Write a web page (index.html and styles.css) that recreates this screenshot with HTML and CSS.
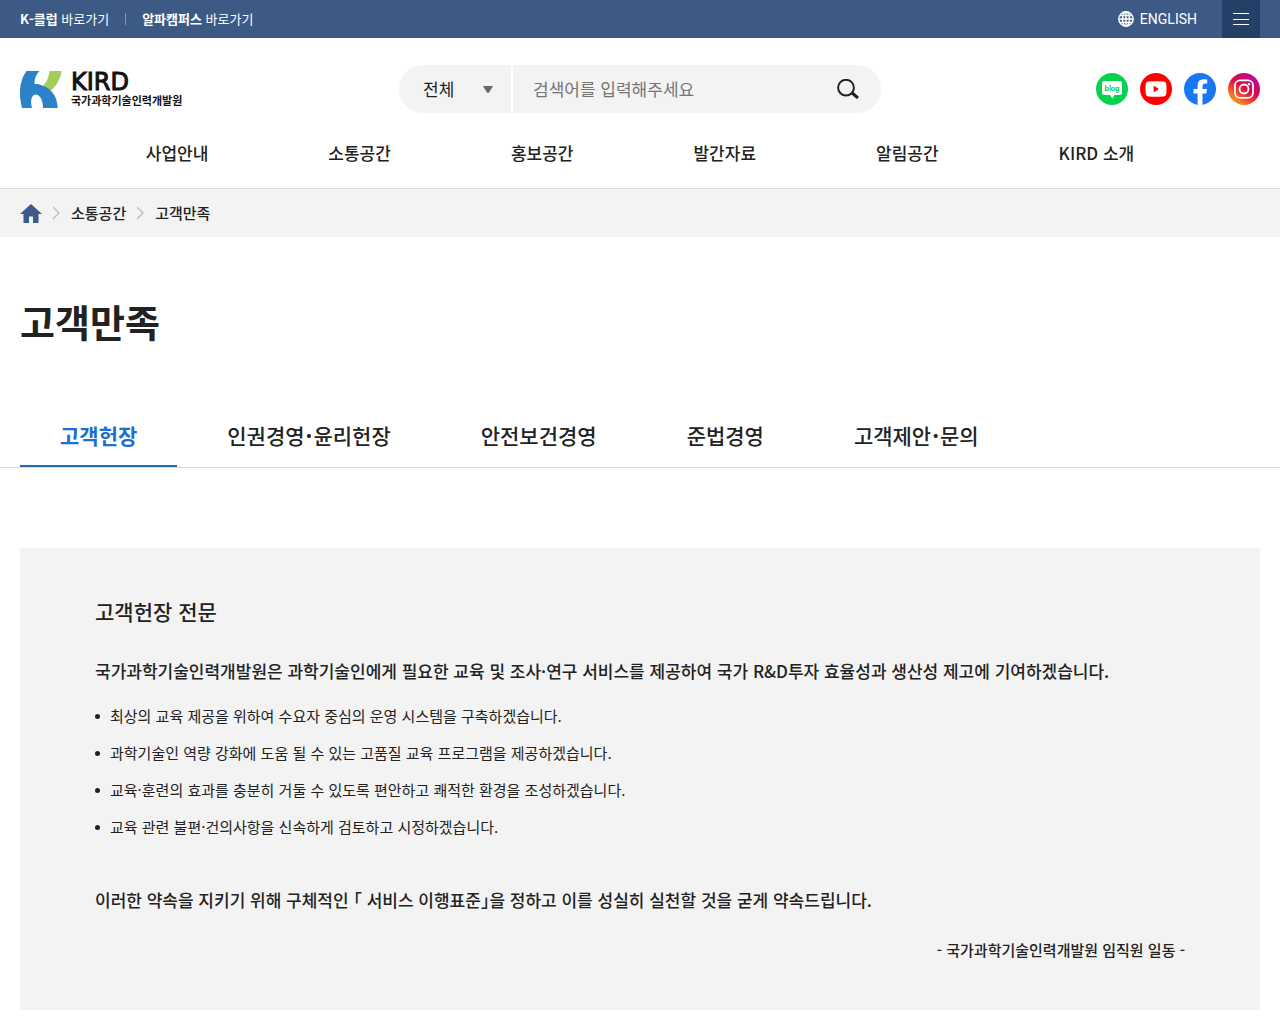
FILE: index.html
```html
<!DOCTYPE html>
<html lang="ko">
<head>
<meta charset="utf-8">
<meta name="viewport" content="width=device-width, initial-scale=1">
<title>고객만족 | KIRD 국가과학기술인력개발원</title>
<link rel="stylesheet" href="styles.css">
</head>
<body>
<div class="topbar">
  <ul class="shortcuts">
    <li><a href="#"><strong>K-클럽</strong> 바로가기</a></li>
    <li><a href="#"><strong>알파캠퍼스</strong> 바로가기</a></li>
  </ul>
  <div class="topbar-tools">
    <a class="language" href="#">
      <svg width="16" height="16" viewBox="0 0 16 16" fill="none" stroke="currentColor" stroke-width="1.4" aria-hidden="true"><circle cx="8" cy="8" r="7.2"/><ellipse cx="8" cy="8" rx="3.5" ry="7.2"/><path d="M8 1v14M1 8h14M2 4.5h12M2 11.5h12"/></svg>
      ENGLISH
    </a>
    <button class="menu-button" type="button" aria-label="전체메뉴">
      <svg width="16" height="14" viewBox="0 0 16 14" stroke="currentColor" aria-hidden="true"><path d="M0 1.5h16M0 7.5h16M0 12.5h16"/></svg>
    </button>
  </div>
</div>

<header class="header">
  <div class="header-main">
    <a class="logo" href="#">
      <svg width="42" height="37" viewBox="0 0 42 37" aria-hidden="true">
        <path fill="#a5cd5b" d="M29.500 0H41.500C40.500 8.500 36 16.500 28.500 21C27 18.500 25 17 22.500 15.500C26.500 12 28.500 6.500 29.500 0Z"/>
        <path fill="#2c82c9" d="M6.500 0H19.500C16.500 3 14.300 7.500 14.300 12.700C26 13.500 37.500 21 37.700 37H23C23 30 20.500 24 16 23.500C11.500 23.500 10 30 12 37H2C-1.500 24 -1 10 6.500 0Z"/>
      </svg>
      <span class="logo-text"><span class="logo-name">KIRD</span><span class="logo-org">국가과학기술인력개발원</span></span>
    </a>
    <form class="search" role="search">
      <div class="search-scope">
        <select aria-label="검색 범위"><option>전체</option></select>
        <svg class="caret" width="10" height="7" viewBox="0 0 10 7" fill="#666" aria-hidden="true"><path d="M0 0h10L6 6.500Q5 7.400 4 6.500Z"/></svg>
      </div>
      <div class="search-field">
        <input type="text" placeholder="검색어를 입력해주세요" aria-label="검색어">
        <button type="button" aria-label="검색">
          <svg width="22" height="20" viewBox="0 0 22 20" fill="none" stroke="#222" aria-hidden="true"><circle cx="9" cy="8.700" r="7.900" stroke-width="2"/><path d="M14.500 13.500L21 19" stroke-width="3"/></svg>
        </button>
      </div>
    </form>
    <div class="social">
      <a href="#" aria-label="블로그"><svg width="32" height="32" viewBox="0 0 32 32"><circle cx="16" cy="16" r="16" fill="#03d34f"/><path fill="#fff" d="M8.500 8h15q2.500 0 2.500 2.500v9q0 2.500-2.500 2.500h-5l-2.200 3.800L14.100 22H8.500Q6 22 6 19.500v-9Q6 8 8.500 8Z"/><text class="blog-text" x="16" y="18" text-anchor="middle">blog</text></svg></a>
      <a href="#" aria-label="유튜브"><svg width="32" height="32" viewBox="0 0 32 32"><circle cx="16" cy="16" r="16" fill="#f00"/><path fill="#fff" d="M9 8.500Q16 7.900 23 8.500q3 .2 3.300 3 .5 4.500 0 9-.3 2.800-3.300 3-7 .6-14 0-3-.2-3.300-3-.5-4.500 0-9 .3-2.800 3.300-3Z"/><path fill="#f00" d="M13.700 12.800v6.400l5.300-3.200Z"/></svg></a>
      <a href="#" aria-label="페이스북"><svg width="32" height="32" viewBox="0 0 32 32"><circle cx="16" cy="16" r="16" fill="#1877f2"/><path fill="#fff" d="M13.600 32V20.600H9.500V16h4.100v-3.600q0-6.100 6.100-6.100 1.700 0 3.500.3v4H21q-2.500 0-2.500 2.400v3h4.600l-.8 4.600h-3.800V32Z"/></svg></a>
      <a href="#" aria-label="인스타그램"><svg width="32" height="32" viewBox="0 0 32 32"><defs><linearGradient id="insta" x1="0.150" y1="0.900" x2="0.750" y2="0.050"><stop offset="0" stop-color="#fda01e"/><stop offset=".25" stop-color="#f4572a"/><stop offset=".55" stop-color="#dc0b45"/><stop offset="1" stop-color="#b5099c"/></linearGradient></defs><circle cx="16" cy="16" r="16" fill="url(#insta)"/><rect x="7" y="7.300" width="18" height="17.600" rx="5" fill="none" stroke="#fff" stroke-width="1.800"/><circle cx="16" cy="16" r="4.500" fill="none" stroke="#fff" stroke-width="1.800"/><circle cx="21" cy="11.200" r="1.200" fill="#fff"/></svg></a>
    </div>
  </div>
  <nav class="main-nav" aria-label="주메뉴">
    <a href="#">사업안내</a><a href="#">소통공간</a><a href="#">홍보공간</a><a href="#">발간자료</a><a href="#">알림공간</a><a href="#">KIRD 소개</a>
  </nav>
</header>

<nav class="breadcrumb" aria-label="현재 위치">
  <a href="#" aria-label="홈"><svg width="22" height="19" viewBox="0 0 22 19" fill="#40598b" aria-hidden="true"><path d="M11 0L22 10H18.500V19H13V12.500H9V19H3.500V10H0Z"/></svg></a>
  <svg width="7" height="14" viewBox="0 0 7 14" fill="none" stroke="#bbb" stroke-width="1.300" aria-hidden="true"><path d="M0 1l6 6-6 6"/></svg>
  <a href="#">소통공간</a>
  <svg width="7" height="14" viewBox="0 0 7 14" fill="none" stroke="#bbb" stroke-width="1.300" aria-hidden="true"><path d="M0 1l6 6-6 6"/></svg>
  <a class="current" href="#" aria-current="page">고객만족</a>
</nav>

<main>
  <h1>고객만족</h1>
  <nav class="tabs" aria-label="고객만족 메뉴">
    <a class="active" href="#">고객헌장</a><a href="#">인권경영<span class="dot">·</span>윤리헌장</a><a href="#">안전보건경영</a><a href="#">준법경영</a><a href="#">고객제안<span class="dot">·</span>문의</a>
  </nav>
  <section class="charter">
    <h2>고객헌장 전문</h2>
    <p class="lead">국가과학기술인력개발원은 과학기술인에게 필요한 교육 및 조사·연구 서비스를 제공하여 국가 R&amp;D투자 효율성과 생산성 제고에 기여하겠습니다.</p>
    <ul>
      <li>최상의 교육 제공을 위하여 수요자 중심의 운영 시스템을 구축하겠습니다.</li>
      <li>과학기술인 역량 강화에 도움 될 수 있는 고품질 교육 프로그램을 제공하겠습니다.</li>
      <li>교육·훈련의 효과를 충분히 거둘 수 있도록 편안하고 쾌적한 환경을 조성하겠습니다.</li>
      <li>교육 관련 불편·건의사항을 신속하게 검토하고 시정하겠습니다.</li>
    </ul>
    <p class="lead pledge">이러한 약속을 지키기 위해 구체적인 「 서비스 이행표준」을 정하고 이를 성실히 실천할 것을 굳게 약속드립니다.</p>
    <p class="signature">- 국가과학기술인력개발원 임직원 일동 -</p>
  </section>
</main>
</body>
</html>
```
FILE: styles.css
```css
* { box-sizing: border-box; }
body {
  margin: 0;
  background: #fff;
  color: #222;
  font-family: "Noto Sans CJK KR", sans-serif;
  font-size: 15px;
  line-height: 24px;
}
a { color: inherit; text-decoration: none; }
h1, h2, p, ul { margin: 0; padding: 0; }
ul { list-style: none; }
svg { display: block; flex: none; }
button { border: 0; padding: 0; background: none; cursor: pointer; }

.topbar {
  display: flex;
  justify-content: space-between;
  height: 38px;
  padding: 0 20px;
  background: #3c5a83;
  color: #fff;
  font-size: 13px;
}
.shortcuts, .topbar-tools, .language { display: flex; align-items: center; }
.shortcuts li { display: flex; align-items: center; }
.shortcuts li + li::before {
  content: "";
  width: 1px;
  height: 12px;
  margin: 0 16px;
  background: #8195b0;
}
.topbar-tools { gap: 25px; }
.language { gap: 6px; font-family: Roboto, sans-serif; font-size: 14px; }
.menu-button {
  display: grid;
  place-items: center;
  width: 38px;
  height: 38px;
  background: #263f66;
  color: #fff;
}

.header { border-bottom: 1px solid #ddd; }
.header-main {
  display: grid;
  grid-template-columns: 1fr minmax(0, 482px) 1fr;
  align-items: center;
  padding: 27px 20px 0;
}
.logo { display: flex; gap: 9px; align-items: center; }
.logo-text { display: flex; flex-direction: column; color: #111; }
.logo-name { font: 24px/22px "DejaVu Sans", sans-serif; -webkit-text-stroke: 1px #111; }
.logo-org { font-size: 11px; line-height: 14px; font-weight: 700; }
.search { display: flex; gap: 2px; height: 48px; border-radius: 24px; overflow: hidden; }
.search-scope, .search-field { display: flex; align-items: center; background: #f3f3f3; }
.search-scope { width: 112px; padding-right: 18px; }
.search-scope select {
  flex: 1;
  min-width: 0;
  height: 48px;
  padding: 0 0 0 24px;
  border: 0;
  background: none;
  appearance: none;
  color: #222;
  font: inherit;
  font-size: 17px;
}
.search-field { flex: 1; min-width: 0; padding: 0 22px 0 20px; }
.search-field input {
  flex: 1;
  min-width: 0;
  height: 46px;
  padding: 0 0 2px;
  border: 0;
  background: none;
  font: inherit;
  font-size: 17px;
}
.search-field input::placeholder { color: #757575; }
.social { display: flex; justify-content: flex-end; gap: 12px; }
.blog-text { font: 700 7px Inter, sans-serif; fill: #03d34f; }
.main-nav {
  display: flex;
  justify-content: center;
  gap: 120px;
  padding: 28px 20px 23px;
  font-size: 17px;
  font-weight: 500;
}
.main-nav a { white-space: nowrap; }

.breadcrumb {
  display: flex;
  align-items: center;
  gap: 11px;
  height: 48px;
  padding: 0 20px;
  background: #f3f3f3;
}
.breadcrumb a { font-weight: 500; }

h1 { padding: 54px 20px 0; font-size: 38px; line-height: 60px; font-weight: 700; }
.tabs {
  display: flex;
  gap: 10px;
  margin-top: 55px;
  padding: 0 20px;
  border-bottom: 1px solid #d8d8d8;
  font-size: 21px;
  line-height: 59px;
  font-weight: 500;
}
.tabs a { padding: 0 40px; border-bottom: 2px solid transparent; white-space: nowrap; }
.tabs .active { border-color: #1e6cb3; color: #1a6fd0; font-weight: 700; }
.dot { padding: 0 1px; font-weight: 700; }

.charter { margin: 80px 20px 14px; padding: 47px 75px 48px; background: #f3f3f3; }
h2 { font-size: 21px; line-height: 32px; font-weight: 500; }
.lead { margin-top: 30px; font-size: 17px; line-height: 28px; font-weight: 500; }
.charter ul { display: grid; gap: 13px; margin: 19px 0 47px; }
.charter li { display: flex; align-items: center; gap: 10px; }
.charter li::before {
  content: "";
  flex: none;
  width: 5px;
  height: 5px;
  border-radius: 50%;
  background: #222;
}
.pledge { font-feature-settings: "halt"; }
.signature { margin-top: 24px; text-align: right; font-weight: 500; }
```
